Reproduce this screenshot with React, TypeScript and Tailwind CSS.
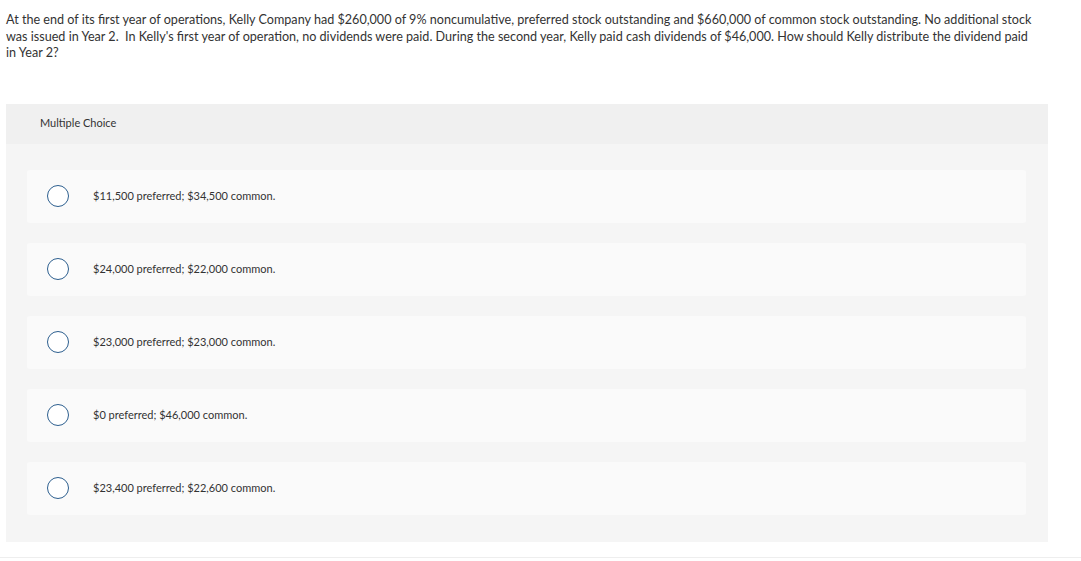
const OPTIONS = [
  '$11,500 preferred; $34,500 common.',
  '$24,000 preferred; $22,000 common.',
  '$23,000 preferred; $23,000 common.',
  '$0 preferred; $46,000 common.',
  '$23,400 preferred; $22,600 common.',
]

export default function App() {
  return (
    <div className="min-h-[561px] bg-white text-[#333] font-['Lato','Open_Sans',sans-serif]">
      <div className="pl-[6px] pt-[12px]">
        <p className="w-[1030px] text-[12.6px] leading-[16.5px] text-[#333]">
          At the end of its first year of operations, Kelly Company had $260,000 of 9% noncumulative, preferred stock
          outstanding and $660,000 of common stock outstanding. No additional stock was issued in Year 2.&nbsp; In
          Kelly's first year of operation, no dividends were paid. During the second year, Kelly paid cash dividends of
          $46,000. How should Kelly distribute the dividend paid in Year 2?
        </p>
      </div>

      <div className="ml-[6px] mt-[42px] w-[1042px] bg-[#f5f5f5]">
        <div className="h-[40px] bg-[#f0f0f0] pl-[34px] flex items-center">
          <span className="text-[11px] text-[#333]">Multiple Choice</span>
        </div>
        <div className="flex flex-col gap-[20px] pl-[21px] pr-[22px] pt-[26px] pb-[27px]">
          {OPTIONS.map(opt => (
            <label key={opt} className="h-[53px] bg-[#fafafa] rounded-[3px] flex items-center cursor-pointer">
              <span className="ml-[20px] w-[22px] h-[22px] rounded-full border-[1.5px] border-[#2d5f8f] bg-white flex-shrink-0" />
              <span className="ml-[24px] text-[11px] text-[#333]">{opt}</span>
            </label>
          ))}
        </div>
      </div>

      <div className="mt-[15px] border-t border-[#eeeeee]" />
    </div>
  )
}
